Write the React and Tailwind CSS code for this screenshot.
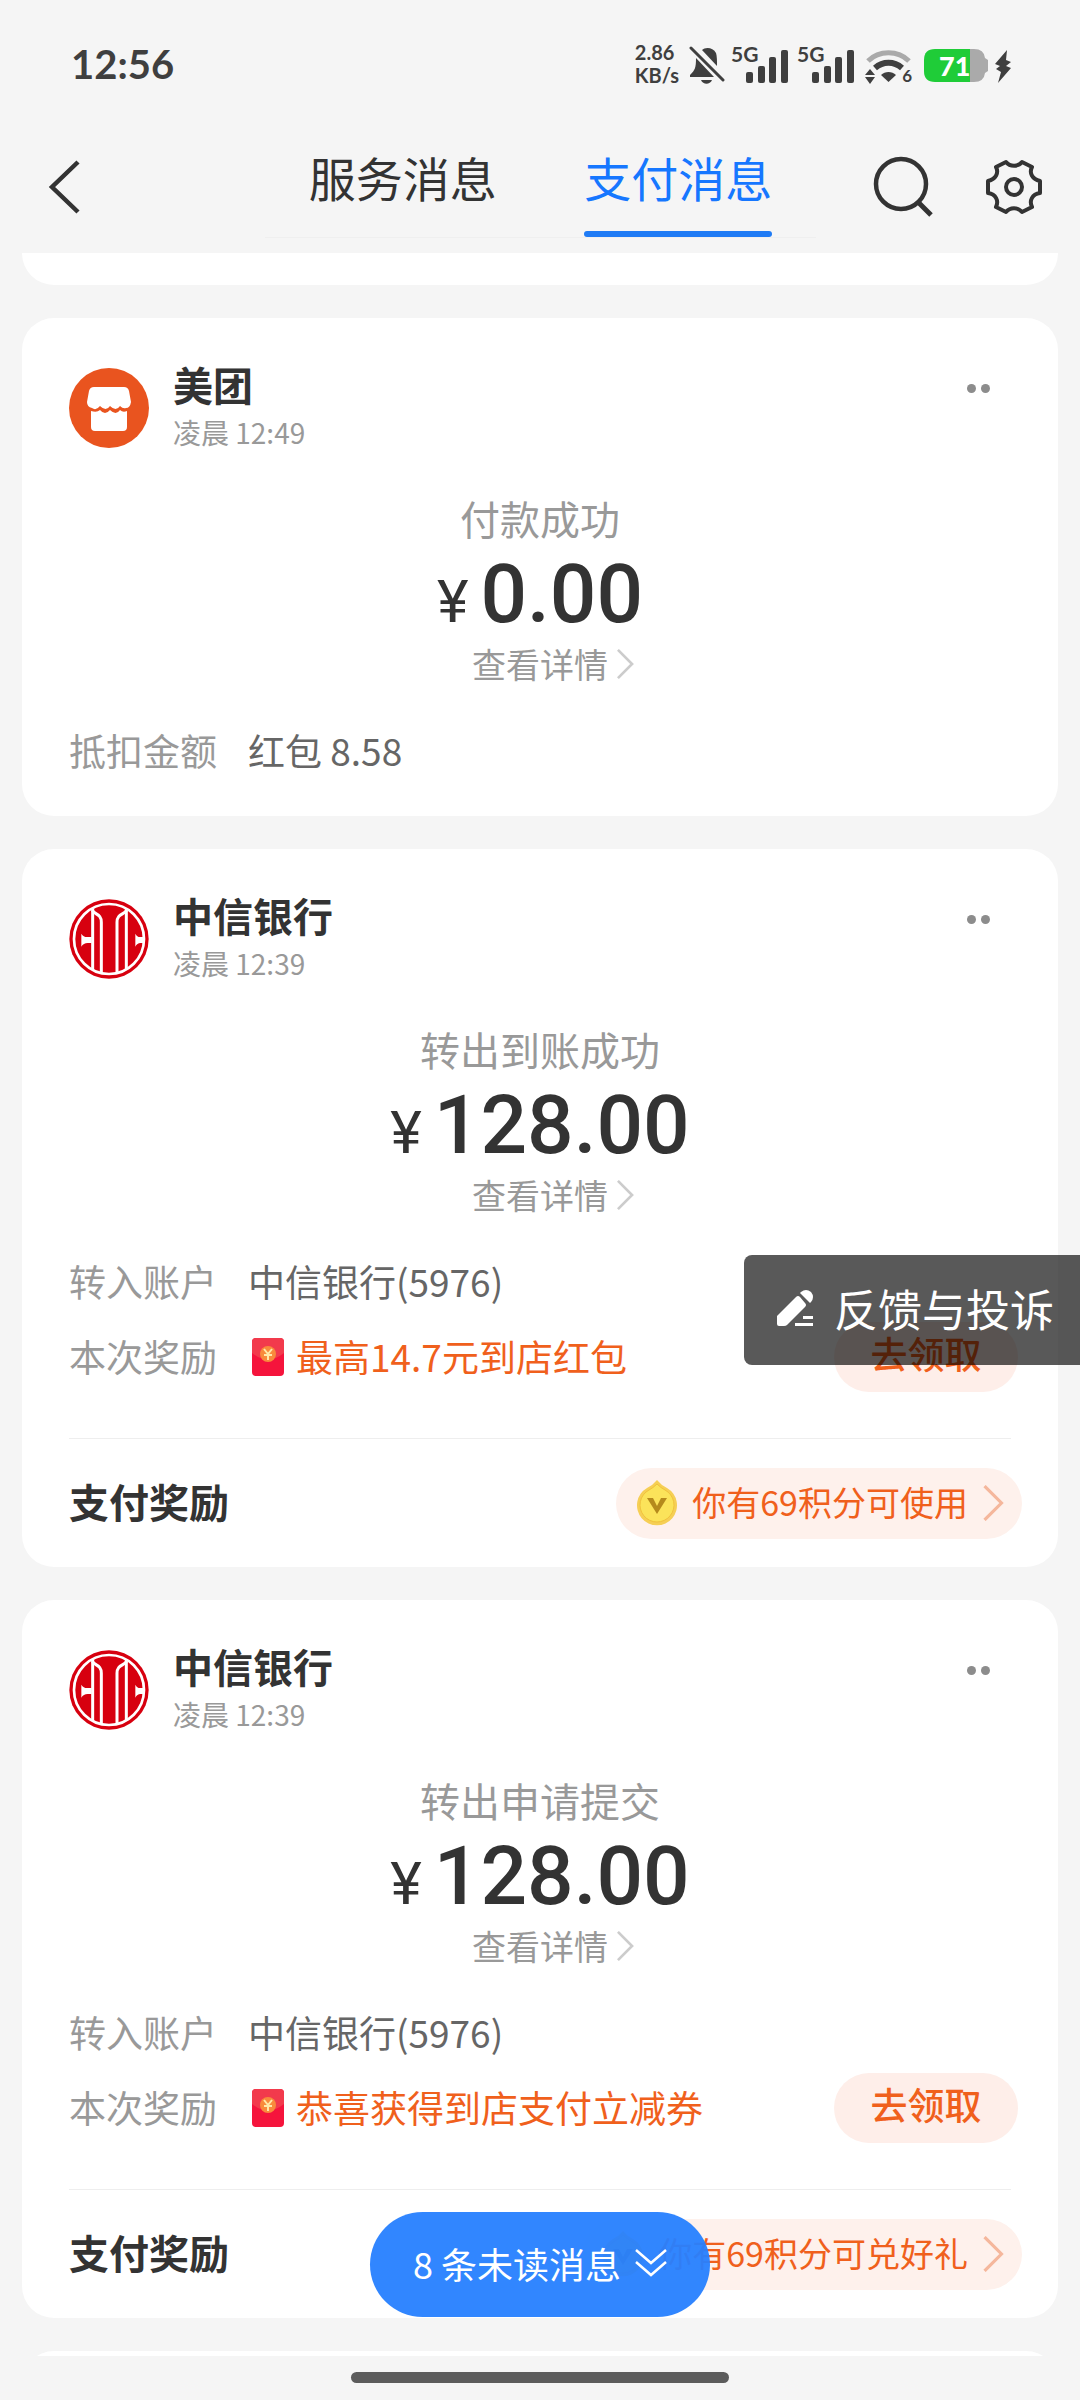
import { useState } from "react"

const messages = [
  {
    id: 1,
    merchant: "美团",
    logo: "meituan",
    time: "凌晨 12:49",
    title: "付款成功",
    amount: "0.00",
    rows: [{ label: "抵扣金额", value: "红包 8.58" }],
  },
  {
    id: 2,
    merchant: "中信银行",
    logo: "citic",
    time: "凌晨 12:39",
    title: "转出到账成功",
    amount: "128.00",
    rows: [{ label: "转入账户", value: "中信银行(5976)" }],
    reward: "最高14.7元到店红包",
    points: "你有69积分可使用",
  },
  {
    id: 3,
    merchant: "中信银行",
    logo: "citic",
    time: "凌晨 12:39",
    title: "转出申请提交",
    amount: "128.00",
    rows: [{ label: "转入账户", value: "中信银行(5976)" }],
    reward: "恭喜获得到店支付立减券",
    points: "你有69积分可兑好礼",
  },
]

const tabs = ["服务消息", "支付消息"]

const Signal = () => (
  <div className="relative h-10 w-[58px]">
    <span className="absolute top-0 left-0 text-[21px] leading-5 font-bold">5G</span>
    <svg className="h-10 w-[58px]" viewBox="0 0 58 40" fill="#3f3f3f">
      <rect x="15" y="28" width="7" height="11" rx="2" />
      <rect x="27" y="22" width="7" height="17" rx="2" />
      <rect x="38" y="13" width="7" height="26" rx="2" />
      <rect x="50" y="6" width="7" height="33" rx="2" />
    </svg>
  </div>
)

const MutedBell = () => (
  <svg className="h-10 w-9" viewBox="0 0 36 40" fill="#3f3f3f">
    <path d="M13 6C16 3 24 3 27 9C28 12 28 17 28 22Z" />
    <path d="M7 14C7 24 6 26 1 31V33H25Z" />
    <path d="M12 36H23C21 41 14 41 12 36Z" />
    <path d="M2 4L34 36" stroke="#3f3f3f" strokeWidth="3" strokeLinecap="round" />
  </svg>
)

const Wifi = () => (
  <div className="relative h-10 w-[47px]">
    <svg className="h-10 w-[47px]" viewBox="0 0 47 40">
      <path d="M3 17C14 6 33 6 44 17" stroke="#aaa" strokeWidth="5" fill="none" />
      <path d="M10 24C18 17 29 17 37 24" stroke="#3f3f3f" strokeWidth="6" fill="none" />
      <path d="M16 31C20 27 27 27 31 31L23.500 38Z" fill="#3f3f3f" />
      <path d="M0 31L5 25L10 31ZM0 33H10L5 40Z" fill="#3f3f3f" />
    </svg>
    <span className="absolute right-0 bottom-0 text-[17px] leading-4 font-bold">6</span>
  </div>
)

const Battery = () => (
  <svg className="h-10 w-[88px]" viewBox="0 0 88 40">
    <path d="M46 5H50Q60 5 61 14L64 16V27L61 29Q60 38 50 38H46Z" fill="#aaa" />
    <path d="M11 5H46V38H11Q0 38 0 27V16Q0 5 11 5Z" fill="#1fcc38" />
    <text x="15" y="32" fontSize="27" fontWeight="900" fontFamily="Lato, sans-serif" fill="#fff">
      71
    </text>
    <path d="M83 6L71 20L76 22L72 25L77 28L74 39L87 24L82 22L87 18L82 16Z" fill="#3f3f3f" />
  </svg>
)

const StatusBar = () => (
  <div className="flex h-32 items-center justify-between pr-[68px] pl-[71px] font-['Lato',sans-serif] text-[#3f3f3f]">
    <span className="text-[40px] leading-12 font-bold">12:56</span>
    <div className="flex items-center">
      <div className="mr-2.5 text-[20px] leading-[23px] font-bold">
        <p>2.86</p>
        <p>KB/s</p>
      </div>
      <MutedBell />
      <div className="ml-1.5 flex gap-2">
        <Signal />
        <Signal />
      </div>
      <div className="ml-2.5 flex gap-3">
        <Wifi />
        <Battery />
      </div>
    </div>
  </div>
)

const Header = ({ activeTab, onChange }) => (
  <header className="grid h-[125px] shrink-0 grid-cols-[265fr_551fr_264fr]">
    <button className="flex h-[118px] items-center pl-12" aria-label="返回">
      <svg className="h-14 w-8" viewBox="0 0 32 56" fill="none" stroke="#333" strokeWidth="4.500">
        <path d="M30 3L4 28L30 53" />
      </svg>
    </button>
    <nav className="flex h-[110px] border-b border-[#efefef]">
      {tabs.map((tab) => (
        <button
          key={tab}
          onClick={() => onChange(tab)}
          className={`flex flex-1 flex-col items-center justify-end text-[47px] leading-[56px] ${
            activeTab === tab ? "text-[#1677ff]" : "text-[#333]"
          }`}
        >
          {tab}
          <span
            className={`mt-[26px] h-1.5 w-[188px] rounded-full ${activeTab === tab ? "bg-[#1f7bf5]" : "bg-transparent"}`}
          />
        </button>
      ))}
    </nav>
    <div className="flex h-[118px] items-center justify-end gap-13 pr-[38px]">
      <button aria-label="搜索">
        <svg className="h-[62px] w-[62px]" viewBox="0 0 62 62" fill="none" stroke="#333" strokeWidth="4.500">
          <circle cx="29" cy="28" r="25" />
          <path d="M46 46L59 59" strokeWidth="5" />
        </svg>
      </button>
      <button aria-label="设置">
        <svg className="h-14 w-14" viewBox="0 0 56 56" fill="none" stroke="#333" strokeWidth="4" strokeLinejoin="round">
          <path d="M20 3C24 8 32 8 36 3L46 8C43 14 46 20 54 22V34C46 35 43 42 46 48L36 53C32 48 24 48 20 53L10 48C13 42 10 35 2 34V22C10 20 13 14 10 8Z" />
          <circle cx="28" cy="28" r="8" />
        </svg>
      </button>
    </div>
  </header>
)

const MeituanLogo = () => (
  <svg className="size-20 shrink-0" viewBox="0 0 80 80">
    <circle cx="40" cy="40" r="40" fill="#e9541f" />
    <path
      d="M25 19H55Q59 19 60 23L62 34Q61 40 57 40Q54 41 51 38Q47 44 41 38Q37 44 31 38Q27 43 23 40Q18 39 18 34L20 23Q21 19 25 19Z"
      fill="#fff"
    />
    <path
      d="M22 43Q28 45 31 42Q36 48 41 42Q47 48 51 42Q54 45 58 43V59Q58 63 54 63H26Q22 63 22 59Z"
      fill="#fff"
    />
  </svg>
)

const CiticLogo = () => (
  <svg className="size-20 shrink-0" viewBox="0 0 240 240">
    <circle cx="120" cy="120" r="119" fill="#d7000f" />
    <circle cx="120" cy="120" r="105" fill="none" stroke="#fff" strokeWidth="8" />
    <g fill="none" stroke="#fff" strokeWidth="9">
      <path d="M71 28V212" />
      <path d="M172 28V212" />
      <path d="M70 34C78 48 97 44 97 70V222" />
      <path d="M173 34C164 48 144 44 144 70V222" />
    </g>
    <path d="M37 104Q44 116 58 114H68V132H58Q44 131 37 143Z" fill="#fff" />
    <path d="M199 104Q205 116 216 114H227V132H216Q205 131 199 143Z" fill="#fff" />
  </svg>
)

const RedPacket = () => (
  <svg className="h-10 w-8 shrink-0" viewBox="0 0 32 40">
    <rect x="0" y="1" width="32" height="38" rx="4" fill="#f5143c" />
    <path d="M4 1H28Q32 1 32 5V16Q16 29 0 16V5Q0 1 4 1Z" fill="#f23a4c" />
    <circle cx="16" cy="17" r="8" fill="#f98a3c" />
    <path d="M12 12L16 17L20 12M16 17V23M12 18H20" stroke="#ffe9a8" strokeWidth="2" fill="none" />
  </svg>
)

const PointsMedal = () => (
  <svg className="h-[46px] w-[42px]" viewBox="0 0 42 46">
    <path d="M21 0Q25 5 31 8A20 20 0 1 1 11 8Q17 5 21 0Z" fill="#f6cf55" />
    <path d="M21 4Q25 8 29 10A17 17 0 1 1 13 10Q17 8 21 4Z" fill="#fbe35a" stroke="#f0c23c" />
    <path d="M11 18H17L21 26L25 18H31L21 34Z" fill="#b58a1c" />
  </svg>
)

const Chevron = ({ className }) => (
  <svg className={className} viewBox="0 0 20 34" fill="none" stroke="currentColor" strokeWidth="3">
    <path d="M2 1L18 17L2 33" />
  </svg>
)

const MessageCard = ({ message }) => (
  <article className="rounded-[32px] bg-white pt-[42px]">
    <div className="flex items-center pr-10 pl-[47px]">
      {message.logo === "meituan" ? <MeituanLogo /> : <CiticLogo />}
      <div className="ml-6">
        <h2 className="text-[40px] leading-12 font-bold text-[#333]">{message.merchant}</h2>
        <p className="text-[28px] leading-12 text-[#999]">{message.time}</p>
      </div>
      <button className="ml-auto flex h-14 w-20 items-center justify-center gap-[5px] self-start" aria-label="更多">
        <span className="size-[9px] rounded-full bg-[#8c8c8c]" />
        <span className="size-[9px] rounded-full bg-[#8c8c8c]" />
      </button>
    </div>

    <div className="mt-[34px] flex flex-col items-center">
      <p className="text-[40px] leading-[56px] text-[#999]">{message.title}</p>
      <p className="flex items-baseline gap-3 font-['Roboto',sans-serif] text-[#333]">
        <span className="text-[60px] leading-[60px]">¥</span>
        <span className="text-[82px] leading-[96px] font-medium">{message.amount}</span>
      </p>
      <a href="#detail" className="flex items-center gap-2 pl-[26px] text-[34px] leading-[44px] text-[#999]">
        查看详情
        <Chevron className="h-[30px] w-[18px] text-[#ccc]" />
      </a>
    </div>

    <dl className="mt-[27px] pr-10 pb-7 pl-[47px] text-[37px]">
      {message.rows.map((row) => (
        <div key={row.label} className="flex h-[75px] items-center">
          <dt className="w-[179px] text-[#999]">{row.label}</dt>
          <dd className="text-[#666]">{row.value}</dd>
        </div>
      ))}
      {message.reward && (
        <div className="flex h-[75px] items-center">
          <dt className="w-[179px] text-[#999]">本次奖励</dt>
          <dd className="flex flex-1 items-center pl-1 text-[#f0601c]">
            <RedPacket />
            <span className="ml-3">{message.reward}</span>
            <button className="ml-auto h-[70px] w-[184px] rounded-full bg-[#feeee9] pb-1.5 font-medium">去领取</button>
          </dd>
        </div>
      )}
    </dl>

    {message.points && (
      <>
        <hr className="mx-[47px] mt-4 border-[#eee]" />
        <div className="flex h-32 items-center justify-between pr-9 pl-[47px]">
          <h3 className="pb-1 text-[40px] font-bold text-[#333]">支付奖励</h3>
          <button className="flex h-[71px] items-center rounded-full bg-[#fef1ec] pr-[18px] pl-5 text-[34px] text-[#f0601c]">
            <PointsMedal />
            <span className="mr-3.5 ml-3.5 pb-1">{message.points}</span>
            <Chevron className="h-[36px] w-[22px] text-[#f5b79c]" />
          </button>
        </div>
      </>
    )}
  </article>
)

const App = () => {
  const [activeTab, setActiveTab] = useState("支付消息")

  return (
    <div className="flex h-screen flex-col bg-[#f5f5f5] font-['Noto_Sans_CJK_SC',sans-serif]">
      <StatusBar />
      <Header activeTab={activeTab} onChange={setActiveTab} />

      <div className="relative min-h-0 flex-1">
        <main className="flex h-full flex-col gap-[33px] overflow-y-auto px-[22px] [scrollbar-width:none]">
          <div className="h-8 shrink-0 rounded-b-[32px] bg-white" />
          {messages.map((message) => (
            <MessageCard key={message.id} message={message} />
          ))}
          <div className="h-16 shrink-0 rounded-t-[32px] bg-white" />
        </main>

        <button className="absolute top-[1002px] right-0 flex h-[110px] items-center gap-5 rounded-l-lg bg-black/65 pr-[26px] pb-1 pl-8 text-[44px] text-white">
          <svg className="h-10 w-[38px]" viewBox="0 0 38 40" fill="#fff">
            <path d="M1 28L20 9Q22 7 24 9L29 15Q31 17 29 19L11 37Q10 38 8 38H3Q1 38 1 36Z" />
            <path d="M25 4Q30 0 35 4Q39 9 35 14L34 15L24 5Z" />
            <path d="M27 28H37V31H27ZM19 35H37V38H19Z" />
          </svg>
          反馈与投诉
        </button>

        <button className="absolute bottom-[39px] left-1/2 flex h-[105px] w-[340px] -translate-x-1/2 items-center justify-center rounded-full bg-[#2680ff]/95 pb-1 text-[36px] text-white">
          8 条未读消息
          <svg className="ml-3.5 h-8 w-8" viewBox="0 0 32 32" fill="none" stroke="#fff" strokeWidth="2.500">
            <path d="M1 3L16 16L31 3M1 15L16 28L31 15" />
          </svg>
        </button>
      </div>

      <footer className="flex h-11 shrink-0 justify-center pt-4">
        <div className="h-[11px] w-[378px] rounded-full bg-[#5c5c5c]" />
      </footer>
    </div>
  )
}

export default App
